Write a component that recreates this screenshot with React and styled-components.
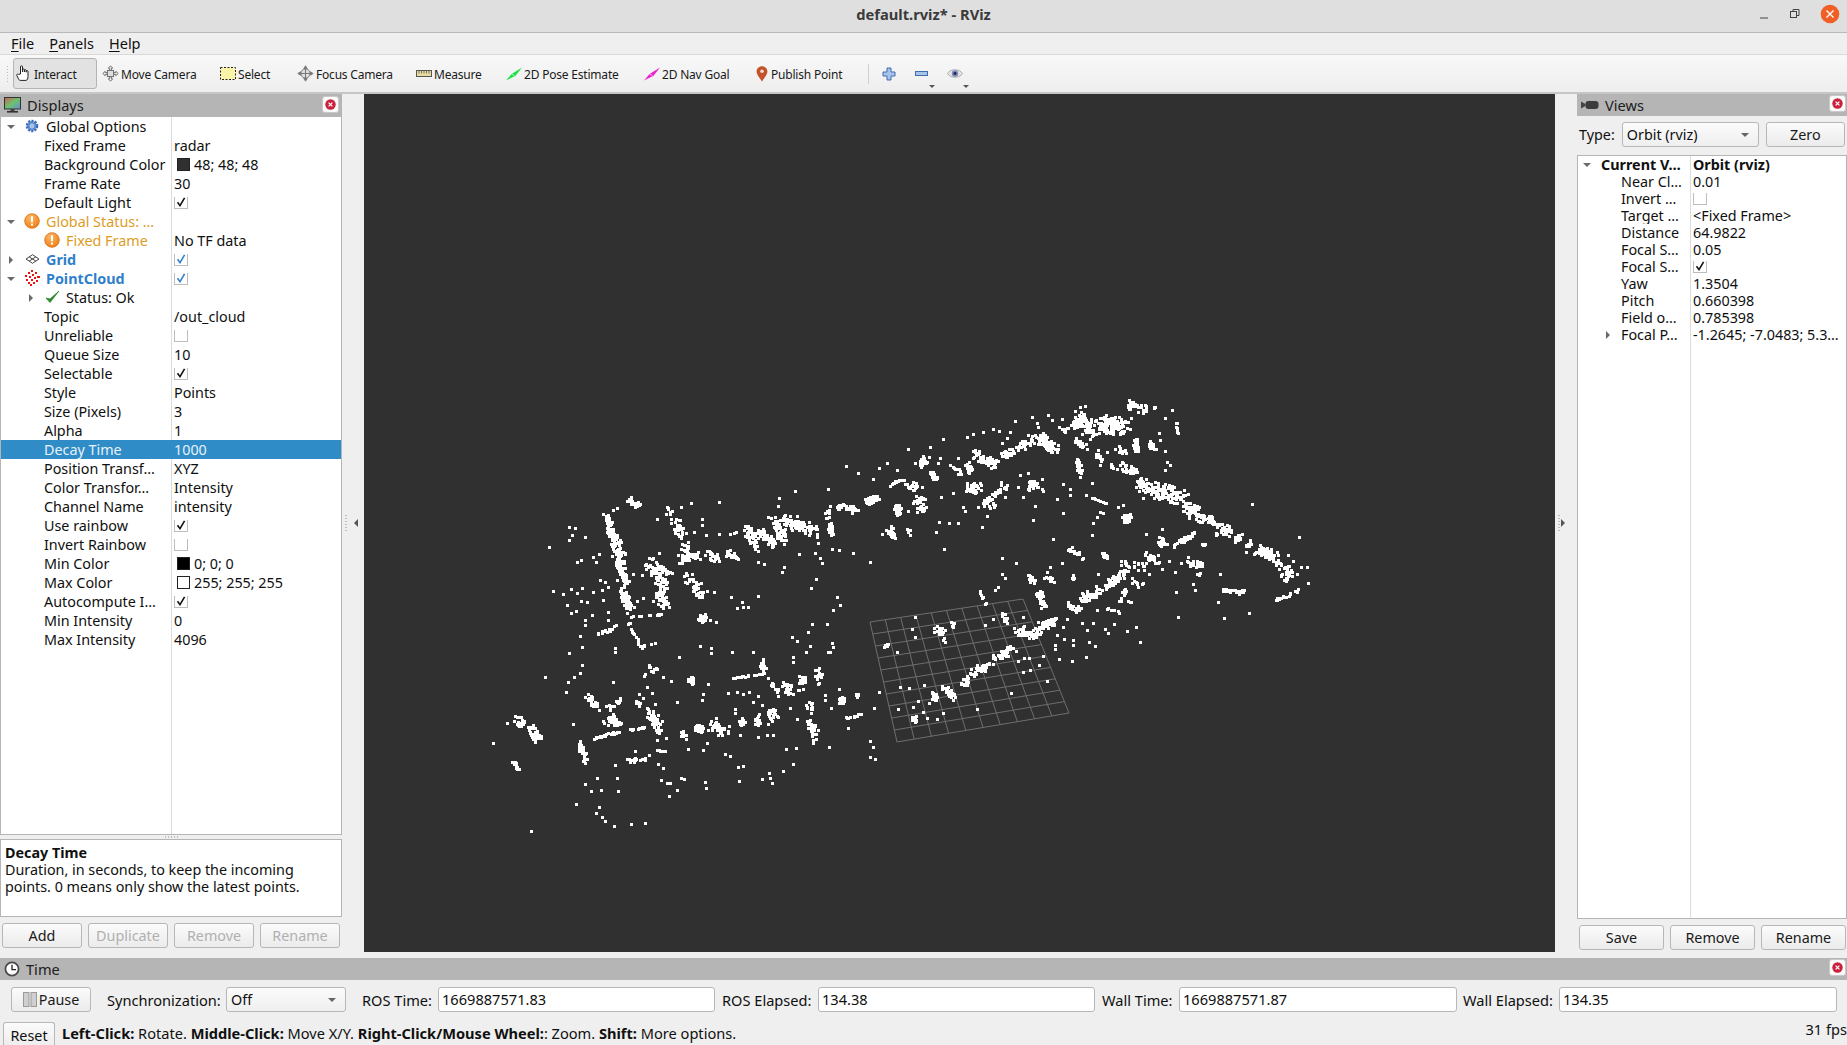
import React from "react";
import styled, { createGlobalStyle, css } from "styled-components";

const Global = createGlobalStyle`
  html, body { margin: 0; padding: 0; width: 1847px; height: 1045px; overflow: hidden; background: #efefef; }
  body { font-family: "Noto Sans", "Open Sans", sans-serif; font-size: 14.35px; color: #101010; }
  * { box-sizing: border-box; }
`;

/* ---------- point-cloud data: clusters are [x1,y1,x2,y2,count,spread] in two local frames ---------- */
const seg7 = [[375,375,400,440,48,5],[400,440,420,510,40,7],[410,510,440,580,38,5],[425,600,450,660,32,6],[440,680,550,672,12,1],[445,700,485,775,16,2],[480,770,540,755,8,1],[350,735,415,705,12,2],[520,520,550,590,45,9],[500,525,580,550,15,4],[560,365,610,440,24,7],[600,510,660,490,30,5],[610,460,625,490,10,5],[620,560,660,610,30,9],[540,610,555,655,28,6],[680,490,710,505,14,5],[735,480,770,500,14,5],[750,430,780,425,5,1],[800,420,830,470,32,6],[840,420,880,460,38,6],[880,385,910,450,30,6],[910,390,1010,420,60,8],[1045,355,1040,385,8,3],[1065,345,1130,360,24,5],[1150,335,1195,320,20,5],[1050,400,1055,440,18,3],[1250,345,1255,375,12,3],[1225,420,1240,440,8,3],[1230,285,1258,270,6,1],[440,330,480,345,16,5],[100,985,130,1000,12,7],[150,1015,180,1050,36,5],[100,1115,115,1140,10,3],[300,1060,315,1105,24,4],[340,1045,420,1025,24,2],[450,1018,500,1010,10,1],[510,965,540,1020,38,7],[385,985,415,1000,28,7],[320,920,355,960,16,6],[380,950,420,930,10,6],[460,950,485,930,7,3],[490,855,530,840,10,2],[505,825,510,835,3,1],[630,860,640,875,12,4],[600,1030,620,1040,8,4],[645,1010,675,1025,20,5],[695,995,720,1025,20,6],[725,1020,745,1015,5,5],[785,985,790,1005,14,4],[830,980,835,1005,12,4],[870,960,885,985,16,6],[755,865,850,850,20,1],[845,810,850,840,12,3],[870,870,895,910,10,3],[915,880,925,910,20,6],[968,860,968,880,12,4],[1015,840,1018,880,14,4],[950,900,975,895,4,1],[1085,930,1085,930,10,5],[1130,915,1132,918,6,3],[1100,985,1150,970,10,1],[990,945,990,955,9,5],[990,1000,1005,1040,20,7],[440,1110,495,1110,14,3],[525,1080,565,1085,7,1],[665,685,665,685,12,5]];
const single7 = "267,412;285,415;275,435;267,450;316,440;207,472;290,515;302,510;340,502;347,515;358,492;360,570;375,575;385,590;365,600;412,570;220,602;248,612;272,598;290,608;305,595;303,632;322,635;340,605;370,630;260,645;287,663;272,670;335,675;315,690;316,705;385,665;385,690;300,737;306,772;268,790;405,775;405,785;490,625;470,632;518,632;530,388;633,340;718,337;603,352;410,355;400,360;665,388;665,405;643,425;679,436;717,432;538,488;460,552;487,555;495,525;835,517;853,522;912,530;905,545;958,492;1005,490;1020,505;1025,518;1015,460;1057,478;1078,480;1120,490;1170,516;1008,566;993,595;1072,622;1080,645;1060,660;835,617;752,622;785,637;772,655;790,652;803,650;680,603;702,607;708,697;690,690;995,703;985,727;1042,703;935,740;952,752;990,767;978,787;940,800;938,817;1055,760;1060,770;1050,787;1045,787;660,768;692,775;692,790;757,785;820,785;597,802;307,825;300,848;265,875;282,862;195,860;398,875;259,907;280,1002;405,1125;412,1163;352,1165;315,1183;333,1203;363,1200;415,1203;287,1243;358,1252;348,1270;365,1280;374,1294;403,1308;452,1303;495,1300;153,1323;40,1060;543,1170;560,1178;570,1180;602,1163;612,1168;590,1200;567,1218;676,1175;679,1193;775,1130;790,1128;776,1172;735,1093;750,1098;846,1167;866,1150;870,1165;875,1178;908,1143;940,1123;918,1077;948,1075;1048,1070;1170,1053;1180,1072;1170,1100;1185,1107;1105,1015;1183,955;1198,905;1078,898;1052,955;1035,915;1035,930;592,937;665,930;670,912;685,882;572,873;548,862;515,910;502,890;478,912;525,942;558,1045;530,1050;625,1078;680,1060;668,1080;465,1082;507,1095;535,1122;550,1133;315,1120;770,905;790,912;808,905;745,910;835,918;818,935;847,945;765,958;765,970;865,1002;860,1035;880,1035;833,1040;780,1035;950,988;930,955;1000,1060;1098,228;1135,250;1180,268;1220,218;1198,235;1045,296;945,303;898,325;893,347";
const seg8 = [[30,280,70,268,8,1],[85,290,110,290,12,6],[110,320,125,360,22,6],[50,345,55,370,18,4],[30,415,35,435,10,4],[85,415,90,435,6,2],[120,225,140,205,14,5],[155,245,165,265,10,4],[210,220,240,255,8,4],[260,220,270,250,16,5],[290,190,345,225,36,6],[365,200,400,180,18,5],[415,170,460,145,20,6],[470,140,530,180,46,7],[255,290,295,295,26,6],[310,340,385,285,26,3],[320,330,335,350,10,5],[355,270,365,285,3,1],[445,275,475,300,18,6],[545,120,600,100,16,5],[585,150,620,175,16,4],[585,75,640,125,55,9],[650,100,740,110,85,10],[745,40,800,60,20,7],[805,45,830,55,3,1],[885,95,895,135,9,1],[715,175,730,185,9,5],[765,145,770,185,14,3],[815,155,820,180,12,4],[690,220,700,245,7,2],[720,230,770,250,20,7],[595,210,600,255,16,3],[650,195,660,205,8,3],[770,260,790,285,12,4],[790,290,900,320,85,11],[910,340,970,385,50,8],[985,380,1000,400,14,4],[1025,420,1050,420,20,7],[1065,450,1085,435,12,4],[1105,450,1105,480,8,3],[1135,480,1180,500,40,7],[1190,520,1200,530,7,6],[1210,560,1235,540,18,6],[1185,630,1260,600,16,2],[1025,600,1090,605,18,3],[615,315,680,340,12,1],[565,475,610,505,10,3],[670,490,680,505,10,3],[495,570,515,570,7,4],[445,560,465,570,9,4],[840,450,850,460,14,5],[875,470,940,430,24,3],[960,460,975,465,5,2],[800,495,830,510,14,5],[920,510,965,530,16,5],[950,550,960,555,3,2],[575,560,580,565,5,3],[565,640,600,660,18,4],[600,630,660,605,32,6],[680,590,710,560,26,5],[730,550,730,550,10,5],[735,520,790,530,14,6],[760,570,790,590,8,5],[740,595,720,630,7,3],[760,640,745,630,3,1],[680,655,720,670,7,2],[475,610,495,645,20,5],[410,720,470,735,30,6],[470,715,530,690,30,5],[370,670,380,695,10,3],[740,380,740,385,22,6],[340,805,400,775,28,5],[270,850,330,820,24,5],[245,890,260,865,10,4],[190,890,220,920,18,4],[160,905,165,935,12,4],[100,985,110,990,10,4],[170,710,190,750,14,5],[215,695,222,715,5,3],[10,770,25,765,5,2],[300,600,320,650,5,5]];
const single8 = "85,178;150,170;188,148;20,218;50,240;105,218;180,205;175,218;233,205;260,140;280,133;310,125;340,118;358,122;390,125;380,145;365,158;405,92;455,80;470,100;475,112;505,75;515,90;545,88;280,182;280,205;420,255;445,250;485,268;415,290;430,320;375,320;465,347;458,390;183,320;218,310;250,350;295,350;255,362;320,378;305,410;208,400;178,395;235,400;168,427;193,478;5,433;83,362;550,370;532,328;548,282;570,298;570,315;636,280;660,365;670,370;650,380;640,400;637,436;715,350;730,345;520,448;365,505;408,520;367,552;375,565;545,520;510,530;500,545;655,180;680,185;660,225;855,182;860,215;870,225;855,240;838,130;840,150;875,60;855,85;890,100;615,48;600,50;1115,343;1258,442;1225,495;1240,512;1262,530;1280,530;1285,578;1020,553;1015,635;1033,685;1108,670;893,680;945,600;888,606;940,582;847,418;797,433;868,512;885,545;903,520;845,537;808,552;655,552;650,660;560,688;550,710;605,700;620,720;640,700;675,718;685,730;703,703;742,724;768,710;781,757;530,735;552,747;580,750;580,765;628,757;645,767;525,765;525,778;538,808;577,814;617,802;488,797;478,824;432,805;447,805;413,813;430,847;450,840;502,873;393,910;290,958;190,968;170,988;140,985;130,965;115,932;100,952;55,957;60,892;88,895;133,885;148,940;52,785;105,680;95,717;105,740;220,930;340,688;315,705;405,725;430,680;355,590;345,600";

function buildCloud() {
  let s = 98765;
  const rnd = () => { s = (s * 1664525 + 1013904223) >>> 0; return s / 4294967296; };
  let d = "";
  const dot = (x, y) => { d += `M${Math.round(x)} ${Math.round(y)}h3v3h-3z`; };
  const frame = (segs, singles, ox) => {
    segs.forEach(([a, b, c, e, n0, sp]) => {
      const n = sp >= 3 ? Math.round(n0 * 1.4) : n0;
      for (let i = 0; i < n; i++) {
        const t = rnd();
        const gx = (rnd() + rnd() - 1) * sp * 3;
        const gy = (rnd() + rnd() - 1) * sp * 3;
        dot((a + (c - a) * t + gx) / 3 + ox - 1, (b + (e - b) * t + gy) / 3 + 389);
      }
    });
    singles.split(";").forEach((p) => { const [x, y] = p.split(",").map(Number); dot(x / 3 + ox - 1, y / 3 + 389); });
  };
  frame(seg7, single7, 480);
  frame(seg8, single8, 880);
  return d;
}
const cloudPath = buildCloud();

function buildGrid() {
  const tl = [870, 622], tr = [1023, 599], br = [1069, 713], bl = [897, 742];
  const mix = (p, q, t) => [p[0] + (q[0] - p[0]) * t, p[1] + (q[1] - p[1]) * t];
  let d = "";
  for (let i = 0; i <= 10; i++) {
    const t = i / 10;
    const a = mix(tl, tr, t), b = mix(bl, br, t), c = mix(tl, bl, t), e = mix(tr, br, t);
    d += `M${a[0]} ${a[1]}L${b[0]} ${b[1]}M${c[0]} ${c[1]}L${e[0]} ${e[1]}`;
  }
  return d;
}
const gridPath = buildGrid();

/* ---------- layout ---------- */
const Page = styled.div`width: 1847px; height: 1045px; display: flex; flex-direction: column; overflow: hidden; background: #efefef;`;
const TitleBar = styled.header`height: 33px; flex: none; display: flex; align-items: center; justify-content: flex-end; position: relative; background: #dfdfdf; border-bottom: 1px solid #b9b9b9;`;
const Title = styled.div`position: absolute; left: 0; right: 0; top: 4px; text-align: center; font-weight: 700; font-size: 14.7px; color: #3a3a3a;`;
const WinControls = styled.div`display: flex; align-items: center; gap: 19px; padding-right: 7px; margin-top: -4px;`;
const MenuBar = styled.nav`height: 22px; flex: none; display: flex; gap: 15px; padding: 0 0 2px 11px; align-items: center; background: #efefef; border-bottom: 1px solid #d9d9d9; font-size: 14.5px;`;
const MenuItem = styled.span`u { text-underline-offset: 2px; }`;
const ToolBar = styled.div`height: 39px; flex: none; display: flex; align-items: center; padding-left: 13px; background: linear-gradient(#f8f8f8, #eeeeee); border-bottom: 2px solid #c6c6c6; position: relative; font-size: 12px; letter-spacing: -0.2px;`;
const Grip = styled.div`position: absolute; left: 6px; top: 10px; width: 3px; height: 18px; background-image: radial-gradient(#bbb 40%, transparent 45%); background-size: 3px 3px;`;
const ToolLabel = styled.span`position: relative; top: 1px;`;
const Tool = styled.div`
  width: ${(p) => p.$w}px; height: 31px; display: flex; align-items: center; gap: ${(p) => p.$gap ?? 2}px; padding-left: ${(p) => p.$pad ?? 2}px; flex: none; white-space: nowrap; position: relative; color: #1a1a1a;
  ${(p) => p.$active && css`background: #e2e2e2; border: 1px solid #b4b4b4; border-radius: 3px; margin-right: 3px;`}
`;
const ToolSep = styled.div`width: 1px; height: 20px; background: #cfcfcf; margin: 0 12px 0 5px; flex: none;`;
const MiniArrow = styled.span`position: absolute; right: ${(p) => p.$r}px; bottom: 1px; width: 0; height: 0; border-left: 3px solid transparent; border-right: 3px solid transparent; border-top: 3px solid #555;`;

const Main = styled.main`height: 858px; flex: none; display: grid; grid-template-columns: 342px 22px 1191px 22px 270px;`;
const Side = styled.section`display: flex; flex-direction: column; min-width: 0; height: 100%;`;
const DockHead = styled.div`
  height: ${(p) => p.$h || 23}px; flex: none; background: #b5b5b5; display: flex; align-items: center; padding: 0 ${(p) => p.$pr ?? 1}px 1px 4px; gap: 6px; font-size: 14.6px; color: #202020;
  & > span { flex: 1; }
`;
const CloseBtn = styled.div`width: 17px; height: 17px; background: #fafafa; border: 1px solid #c9c9c9; border-radius: 3px; display: flex; align-items: center; justify-content: center; margin-top: -2px;`;

const Tree = styled.div`flex: 1; min-height: 0; background: #fff; border: 1px solid #b5b5b5; border-top: ${(p) => (p.$top ? "1px solid #b5b5b5" : "none")}; position: relative; overflow: hidden;`;
const ColLine = styled.div`position: absolute; top: 0; bottom: 0; left: ${(p) => p.$x}px; width: 1px; background: #dcdcdc;`;
const Row = styled.div`
  height: ${(p) => p.$h}px; display: grid; grid-template-columns: ${(p) => p.$col}px 1fr; align-items: center; position: relative; white-space: nowrap;
  ${(p) => p.$sel && css`background: #308cc6; color: #e6f2fa;`}
`;
const NameCell = styled.div`display: flex; align-items: center; height: 100%; padding-left: ${(p) => p.$pad}px; position: relative; min-width: 0; overflow: hidden;
  color: ${(p) => p.$c || "inherit"}; font-weight: ${(p) => (p.$b ? 700 : 400)};`;
const ValueCell = styled.div`display: flex; align-items: center; padding-left: ${(p) => p.$pad ?? 2}px; gap: 4px; font-weight: ${(p) => (p.$b ? 700 : 400)}; min-width: 0; overflow: hidden;`;
const Arrow = styled.span`
  position: absolute; left: ${(p) => p.$x}px; top: 50%; width: 0; height: 0;
  ${(p) => (p.$open
    ? css`margin-top: -2px; border-left: 4px solid transparent; border-right: 4px solid transparent; border-top: 4px solid #6a6a6a;`
    : css`margin-top: -4px; border-top: 4px solid transparent; border-bottom: 4px solid transparent; border-left: 4px solid #6a6a6a;`)}
`;
const RowIcon = styled.span`position: absolute; left: ${(p) => p.$x}px; top: 50%; transform: translateY(-50%); display: flex; margin-top: -1px;`;
const Check = styled.span`width: 14px; height: 14px; background: #fff; border: 1px solid #bdbdbd; display: flex; align-items: center; justify-content: center; margin-top: -2px;`;
const Swatch = styled.span`width: 13px; height: 13px; margin-left: 3px; border: 1px solid #222; background: ${(p) => p.$c}; flex: none;`;

const Splitter = styled.div`
  display: flex; align-items: center; justify-content: center; height: 100%; position: relative;
  padding: ${(p) => (p.$right ? "0 6px 0 0" : "0 0 0 6px")};
  &::before { content: ""; position: absolute; top: 50%; margin-top: -9px; left: 3px; width: 2px; height: 18px; background-image: radial-gradient(#bdbdbd 45%, transparent 50%); background-size: 2px 3px; }
`;
const SplitArrow = styled.span`width: 0; height: 0; border-top: 4px solid transparent; border-bottom: 4px solid transparent; ${(p) => (p.$right ? "border-left: 4px solid #555;" : "border-right: 4px solid #555;")}`;
const Viewport = styled.div`background: #303030; height: 100%; overflow: hidden;`;
const CloudSvg = styled.svg`display: block; width: 1191px; height: 858px;`;

const DescBox = styled.div`
  height: 78px; margin-top: 4px; flex: none; background: #fff; border: 1px solid #b5b5b5; padding: 4px 4px; line-height: 17px; position: relative;
  &::before { content: ""; position: absolute; top: -4px; left: 163px; width: 16px; height: 2px; background-image: radial-gradient(#bdbdbd 45%, transparent 50%); background-size: 3px 2px; }
`;
const ButtonRow = styled.div`display: flex; gap: ${(p) => p.$gap}px; padding: ${(p) => p.$pad}; flex: none;`;
const Btn = styled.div`
  width: ${(p) => p.$w}px; height: ${(p) => p.$h || 25}px; flex: none; display: flex; align-items: center; justify-content: center; gap: 2px; border: 1px solid #b7b7b7; border-radius: 3px;
  background: linear-gradient(#fbfbfb, #ebebeb); color: ${(p) => (p.$off ? "#b0b0b0" : "#1a1a1a")}; padding-bottom: 1px;
`;
const TypeRow = styled.div`height: 39px; flex: none; display: flex; align-items: center; padding: 0 2px 2px 2px; gap: 7px;`;
const Combo = styled.div`
  width: ${(p) => p.$w}px; height: 25px; flex: none; border: 1px solid #b7b7b7; border-radius: 3px; background: linear-gradient(#fbfbfb, #efefef); display: flex; align-items: center; padding: 0 0 1px 4px; position: relative;
  &::after { content: ""; position: absolute; right: 9px; top: 10px; border-left: 4px solid transparent; border-right: 4px solid transparent; border-top: 4px solid #666; }
`;

const TimePanel = styled.section`margin-top: 6px; flex: 1; min-height: 0; display: flex; flex-direction: column;`;
const TimeControls = styled.div`height: 32px; flex: none; display: flex; align-items: center; padding: 7px 0 0 11px;`;
const Label = styled.span`white-space: nowrap; margin-left: ${(p) => p.$ml}px; width: ${(p) => p.$w}px; flex: none; font-size: 14.6px;`;
const Field = styled.div`width: ${(p) => p.$w}px; height: 25px; flex: none; background: #fff; border: 1px solid #b7b7b7; border-radius: 3px; padding: 0 0 1px 3px; display: flex; align-items: center; font-size: 14.6px;`;
const StatusBar = styled.footer`flex: 1; display: flex; align-items: flex-end; padding: 0 0 0 3px; overflow: visible; position: relative;`;
const ResetBtn = styled.div`width: 52px; height: 23px; flex: none; border: 1px solid #b7b7b7; border-bottom: none; border-radius: 3px 3px 0 0; background: linear-gradient(#fbfbfb, #eeeeee); text-align: center; line-height: 25px;`;
const StatusText = styled.div`margin-left: 7px; height: 21px; line-height: 19px; white-space: nowrap; flex: 1; font-size: 14.6px;`;
const Fps = styled.div`height: 25px; line-height: 18px; white-space: nowrap; font-size: 14.6px;`;

/* ---------- icons ---------- */
const CloseIcon = () => (
  <svg width="11" height="11" viewBox="0 0 11 11"><circle cx="5.5" cy="5.5" r="5.2" fill="#c9203c"/><path d="M3.6 3.6l3.8 3.8M7.4 3.6l-3.8 3.8" stroke="#fff" strokeWidth="1.2"/></svg>
);
const Gear = () => (
  <svg width="14" height="14" viewBox="0 0 14 14"><circle cx="7" cy="7" r="5" fill="#7fa5dc" stroke="#3e6fb8" strokeWidth="2.6" strokeDasharray="2 1.2"/><circle cx="7" cy="7" r="3.2" fill="#a8c3ea" stroke="#3e6fb8" strokeWidth=".8"/></svg>
);
const Warn = () => (
  <svg width="16" height="16" viewBox="0 0 16 16"><defs><radialGradient id="wg" cx=".4" cy=".3" r=".8"><stop offset="0" stopColor="#ffb765"/><stop offset="1" stopColor="#ea7a12"/></radialGradient></defs><circle cx="8" cy="8" r="7.3" fill="url(#wg)" stroke="#d86d10" strokeWidth=".8"/><rect x="7" y="3.2" width="2" height="6" fill="#fff"/><rect x="7" y="10.6" width="2" height="2" fill="#fff"/></svg>
);
const GridIcon = () => (
  <svg width="15" height="10" viewBox="0 0 15 10" fill="none" stroke="#444" strokeWidth="1"><path d="M7.5.7L14 5 7.5 9.3 1 5z"/><path d="M4.2 2.9L10.8 7.1M10.8 2.9L4.2 7.1"/></svg>
);
const CloudIcon = () => (
  <svg width="16" height="16" viewBox="0 0 16 16" fill="#ee1111"><path d="M6 0h2v2H6zM3 2h2v2H3zM10 2h2v2h-2zM7 4h2v2H7zM0 5h2v2H0zM4 6h2v2H4zM12 6h3v2h-3zM9 7h2v2H9zM1 9h2v2H1zM6 9h2v2H6zM11 10h2v2h-2zM3 12h2v2H3zM8 12h2v2H8zM5 14h2v2H5z"/></svg>
);
const GreenCheck = () => (
  <svg width="15" height="13" viewBox="0 0 15 13"><path d="M1 7.5L5 12 14 .5 5 8.5z" fill="#2e8a2e" stroke="#2e8a2e" strokeWidth=".8"/></svg>
);
const Tick = ({ c }) => (
  <svg width="10" height="10" viewBox="0 0 10 10" fill="none"><path d="M1.5 5.2L4 8.6 8.6 .9" stroke={c || "#111"} strokeWidth="1.6"/></svg>
);
const Monitor = () => (
  <svg width="17" height="16" viewBox="0 0 17 16"><defs><linearGradient id="mg" x1="0" x2="1" y1="0" y2="1"><stop offset="0" stopColor="#d05c5c"/><stop offset=".5" stopColor="#6ac46a"/><stop offset="1" stopColor="#6a8ad8"/></linearGradient></defs><rect x=".5" y=".5" width="16" height="11.5" fill="url(#mg)" stroke="#333"/><rect x="6.5" y="12" width="4" height="2" fill="#444"/><rect x="3" y="14" width="11" height="1.6" fill="#333"/></svg>
);
const Clock = () => (
  <svg width="16" height="16" viewBox="0 0 16 16"><circle cx="8" cy="8" r="6.6" fill="#fff" stroke="#4a4a4a" strokeWidth="1.8"/><path d="M8 3.8V8.6H12" fill="none" stroke="#222" strokeWidth="1.3"/></svg>
);
const ViewCam = () => (
  <svg width="18" height="10" viewBox="0 0 18 10"><path d="M0 1.5L4.5 4V6L0 8.5z" fill="#444"/><rect x="4.5" y="1" width="13" height="8" rx="3" fill="#3c3c3c"/></svg>
);
const HandIcon = () => (
  <svg width="17" height="17" viewBox="0 0 17 17" fill="#fff" stroke="#222" strokeWidth="1"><path d="M4.5 9V1.8c0-1.4 2-1.4 2 0V7l0-2.2c0-1.1 1.9-1.1 1.9 0V7l0-1.6c0-1 1.8-1 1.8 0V7.2l0-.9c0-1 1.8-1 1.8 0v5.2c0 2-.8 3.9-2 3.9H4.2c-1 0-1.2-.7-1.7-1.6L.8 10.5c-.5-1 .8-2 1.6-1.1z"/></svg>
);
const MoveCam = () => (
  <svg width="17" height="17" viewBox="0 0 17 17" fill="none" stroke="#666" strokeWidth=".9"><path d="M8.5.8l2.2 2.4H9.4v2.2h-1.8V3.2H6.3zM8.5 16.2l2.2-2.4H9.4v-2.2h-1.8v2.2H6.3zM.8 8.5L3.2 6.3v1.3h2.2v1.8H3.2v1.3zM16.2 8.5l-2.4-2.2v1.3h-2.2v1.8h2.2v1.3z" fill="#f1f1f1"/><rect x="5.4" y="5.4" width="6.2" height="6.2" fill="#ddd"/></svg>
);
const SelectIcon = () => (
  <svg width="16" height="13" viewBox="0 0 16 13"><rect x=".5" y=".5" width="15" height="12" fill="#f9f4a8" stroke="#222" strokeDasharray="2 1.5"/></svg>
);
const FocusIcon = () => (
  <svg width="17" height="17" viewBox="0 0 17 17" fill="none" stroke="#7a7a7a"><circle cx="8.5" cy="8.5" r="4.6" fill="#dedede"/><path d="M8.5 0.8L10.2 3.5H6.8zM8.5 16.2L6.8 13.5h3.4zM.8 8.5L3.5 6.8v3.4zM16.2 8.5L13.5 10.2V6.8z" fill="#d0d0d0"/><path d="M8.5 2v13M2 8.5h13"/></svg>
);
const Ruler = () => (
  <svg width="16" height="7" viewBox="0 0 16 7"><rect x=".5" y=".5" width="15" height="6" fill="#e9dca0" stroke="#555"/><path d="M3 1v2.5M5.5 1v2.5M8 1v2.5M10.5 1v2.5M13 1v2.5" stroke="#555" strokeWidth=".8"/></svg>
);
const Needle = ({ c }) => (
  <svg width="16" height="14" viewBox="0 0 16 14"><path d="M0 13.5L6 6.5 9 9zM16 .5L5.5 7 9 9.5z" fill={c}/></svg>
);
const Pin = () => (
  <svg width="12" height="16" viewBox="0 0 12 16"><path d="M6 .3c3 0 5.4 2.3 5.4 5.2 0 3.4-3.5 6.4-5.4 10.2C4.100 11.900.6 8.900.6 5.500.6 2.600 3 .3 6 .3z" fill="#c4532a"/><circle cx="6" cy="5.300" r="1.800" fill="#f0e0d0"/></svg>
);
const Plus = () => (
  <svg width="14" height="14" viewBox="0 0 14 14"><path d="M5 1h4v4h4v4H9v4H5V9H1V5h4z" fill="#a8c3ea" stroke="#3e6db0"/></svg>
);
const Minus = () => (
  <svg width="14" height="6" viewBox="0 0 14 6"><rect x=".5" y=".5" width="12" height="4" fill="#a8c3ea" stroke="#3e6db0"/></svg>
);
const Eye = () => (
  <svg width="16" height="11" viewBox="0 0 16 11"><path d="M.5 5.500C3 .5 13 .5 15.500 5.500 13 10.500 3 10.500 .5 5.500z" fill="#e4e4e4" stroke="#a0a0a0" strokeWidth=".8"/><circle cx="8" cy="5.500" r="3.200" fill="#7c88bd"/><circle cx="8" cy="5.500" r="1.400" fill="#20264a"/></svg>
);
const PauseIcon = () => (
  <svg width="14" height="15" viewBox="0 0 14 15"><rect x=".5" y=".5" width="5.500" height="14" fill="#cfcfcf" stroke="#9a9a9a"/><rect x="8" y=".5" width="5.500" height="14" fill="#cfcfcf" stroke="#9a9a9a"/></svg>
);

/* ---------- data ---------- */
const BLUE = "#2f7fcb";
const GOLD = "#dc9d1f";
const displayRows = [
  { name: "Global Options", open: true, arrow: 6, icon: <Gear />, ix: 24, pad: 45 },
  { name: "Fixed Frame", value: "radar" },
  { name: "Background Color", color: "#303030", value: "48; 48; 48" },
  { name: "Frame Rate", value: "30" },
  { name: "Default Light", check: "#111" },
  { name: "Global Status: …", open: true, arrow: 6, icon: <Warn />, ix: 23, pad: 45, c: GOLD },
  { name: "Fixed Frame", icon: <Warn />, ix: 43, pad: 65, c: GOLD, value: "No TF data" },
  { name: "Grid", open: false, arrow: 8, icon: <GridIcon />, ix: 24, pad: 45, c: BLUE, b: true, check: BLUE },
  { name: "PointCloud", open: true, arrow: 6, icon: <CloudIcon />, ix: 24, pad: 45, c: BLUE, b: true, check: BLUE },
  { name: "Status: Ok", open: false, arrow: 28, icon: <GreenCheck />, ix: 44, pad: 65 },
  { name: "Topic", value: "/out_cloud" },
  { name: "Unreliable", check: null },
  { name: "Queue Size", value: "10" },
  { name: "Selectable", check: "#111" },
  { name: "Style", value: "Points" },
  { name: "Size (Pixels)", value: "3" },
  { name: "Alpha", value: "1" },
  { name: "Decay Time", value: "1000", sel: true },
  { name: "Position Transf…", value: "XYZ" },
  { name: "Color Transfor…", value: "Intensity" },
  { name: "Channel Name", value: "intensity" },
  { name: "Use rainbow", check: "#111" },
  { name: "Invert Rainbow", check: null },
  { name: "Min Color", color: "#000", value: "0; 0; 0" },
  { name: "Max Color", color: "#fff", value: "255; 255; 255" },
  { name: "Autocompute I…", check: "#111" },
  { name: "Min Intensity", value: "0" },
  { name: "Max Intensity", value: "4096" },
];
const viewRows = [
  { name: "Current V…", open: true, arrow: 5, pad: 23, b: true, value: "Orbit (rviz)", vb: true },
  { name: "Near Cl…", value: "0.01" },
  { name: "Invert …", check: null },
  { name: "Target …", value: "<Fixed Frame>" },
  { name: "Distance", value: "64.9822" },
  { name: "Focal S…", value: "0.05" },
  { name: "Focal S…", check: "#111" },
  { name: "Yaw", value: "1.3504" },
  { name: "Pitch", value: "0.660398" },
  { name: "Field o…", value: "0.785398" },
  { name: "Focal P…", open: false, arrow: 28, value: "-1.2645; -7.0483; 5.3…" },
];
const hasCheck = (r) => Object.prototype.hasOwnProperty.call(r, "check");

const TreeRows = ({ rows, h, col, defaultPad }) =>
  rows.map((r, i) => (
    <Row key={i} $h={h} $col={col} $sel={r.sel}>
      <NameCell $pad={r.pad ?? defaultPad} $c={r.c} $b={r.b}>
        {r.arrow !== undefined && <Arrow $x={r.arrow} $open={r.open} />}
        {r.icon && <RowIcon $x={r.ix}>{r.icon}</RowIcon>}
        {r.name}
      </NameCell>
      <ValueCell $b={r.vb}>
        {r.color && <Swatch $c={r.color} />}
        {hasCheck(r) && <Check>{r.check && <Tick c={r.check} />}</Check>}
        {r.value}
      </ValueCell>
    </Row>
  ));

const tools = [
  { w: 84, icon: <HandIcon />, label: "Interact", active: true, gap: 1 },
  { w: 118, icon: <MoveCam />, label: "Move Camera" },
  { w: 77, icon: <SelectIcon />, label: "Select" },
  { w: 119, icon: <FocusIcon />, label: "Focus Camera" },
  { w: 90, icon: <Ruler />, label: "Measure" },
  { w: 138, icon: <Needle c="#1fe04a" />, label: "2D Pose Estimate" },
  { w: 110, icon: <Needle c="#ee22cc" />, label: "2D Nav Goal" },
  { w: 111, icon: <Pin />, label: "Publish Point", pad: 4, gap: 3 },
];

export default function App() {
  return (
    <Page>
      <Global />
      <TitleBar>
        <Title>default.rviz* - RViz</Title>
        <WinControls>
          <svg width="12" height="12" viewBox="0 0 12 12"><path d="M2 10h8" stroke="#444" strokeWidth="1"/></svg>
          <svg width="12" height="12" viewBox="0 0 12 12" fill="none" stroke="#444"><rect x="1.500" y="3.500" width="6" height="6"/><path d="M4 3.500V1.500h6v6H7.500"/></svg>
          <svg width="20" height="20" viewBox="0 0 20 20"><circle cx="10" cy="10" r="9.300" fill="#ef5f26"/><path d="M6.500 6.500l7 7M13.500 6.500l-7 7" stroke="#fff" strokeWidth="1.400"/></svg>
        </WinControls>
      </TitleBar>
      <MenuBar>
        <MenuItem><u>F</u>ile</MenuItem>
        <MenuItem><u>P</u>anels</MenuItem>
        <MenuItem><u>H</u>elp</MenuItem>
      </MenuBar>
      <ToolBar>
        <Grip />
        {tools.map((t) => (
          <Tool key={t.label} $w={t.w} $active={t.active} $pad={t.pad} $gap={t.gap}>{t.icon}<ToolLabel>{t.label}</ToolLabel></Tool>
        ))}
        <ToolSep />
        <Tool $w={33} $pad={1}><Plus /></Tool>
        <Tool $w={32} $pad={1}><Minus /><MiniArrow $r={11} /></Tool>
        <Tool $w={32} $pad={1}><Eye /><MiniArrow $r={9} /></Tool>
      </ToolBar>
      <Main>
        <Side>
          <DockHead $pr={3}><Monitor /><span>Displays</span><CloseBtn><CloseIcon /></CloseBtn></DockHead>
          <Tree>
            <ColLine $x={170} />
            <TreeRows rows={displayRows} h={19} col={171} defaultPad={43} />
          </Tree>
          <DescBox>
            <b>Decay Time</b><br />
            Duration, in seconds, to keep the incoming<br />
            points. 0 means only show the latest points.
          </DescBox>
          <ButtonRow $gap={6} $pad="6px 2px 4px 2px">
            <Btn $w={80}>Add</Btn>
            <Btn $w={80} $off>Duplicate</Btn>
            <Btn $w={80} $off>Remove</Btn>
            <Btn $w={80} $off>Rename</Btn>
          </ButtonRow>
        </Side>
        <Splitter><SplitArrow /></Splitter>
        <Viewport>
          <CloudSvg viewBox="364 94 1191 858">
            <path d={gridPath} fill="none" stroke="#6e6e6e" strokeWidth="1" />
            <path d={cloudPath} fill="#fff" shapeRendering="crispEdges" />
          </CloudSvg>
        </Viewport>
        <Splitter $right><SplitArrow $right /></Splitter>
        <Side>
          <DockHead $h={22}><ViewCam /><span>Views</span><CloseBtn><CloseIcon /></CloseBtn></DockHead>
          <TypeRow>
            <span>Type:</span>
            <Combo $w={137}>Orbit (rviz)</Combo>
            <Btn $w={79}>Zero</Btn>
          </TypeRow>
          <Tree $top>
            <ColLine $x={112} />
            <TreeRows rows={viewRows} h={17} col={113} defaultPad={43} />
          </Tree>
          <ButtonRow $gap={6} $pad="6px 0 2px 2px">
            <Btn $w={85}>Save</Btn>
            <Btn $w={85}>Remove</Btn>
            <Btn $w={85}>Rename</Btn>
          </ButtonRow>
        </Side>
      </Main>
      <TimePanel>
        <DockHead $h={22}><Clock /><span>Time</span><CloseBtn><CloseIcon /></CloseBtn></DockHead>
        <TimeControls>
          <Btn $w={80}><PauseIcon />Pause</Btn>
          <Label $ml={16} $w={119}>Synchronization:</Label>
          <Combo $w={120}>Off</Combo>
          <Label $ml={16} $w={76}>ROS Time:</Label>
          <Field $w={277}>1669887571.83</Field>
          <Label $ml={7} $w={96}>ROS Elapsed:</Label>
          <Field $w={277}>134.38</Field>
          <Label $ml={7} $w={77}>Wall Time:</Label>
          <Field $w={278}>1669887571.87</Field>
          <Label $ml={6} $w={96}>Wall Elapsed:</Label>
          <Field $w={278}>134.35</Field>
        </TimeControls>
        <StatusBar>
          <ResetBtn>Reset</ResetBtn>
          <StatusText><b>Left-Click:</b> Rotate. <b>Middle-Click:</b> Move X/Y. <b>Right-Click/Mouse Wheel:</b>: Zoom. <b>Shift:</b> More options.</StatusText>
          <Fps>31 fps</Fps>
        </StatusBar>
      </TimePanel>
    </Page>
  );
}
